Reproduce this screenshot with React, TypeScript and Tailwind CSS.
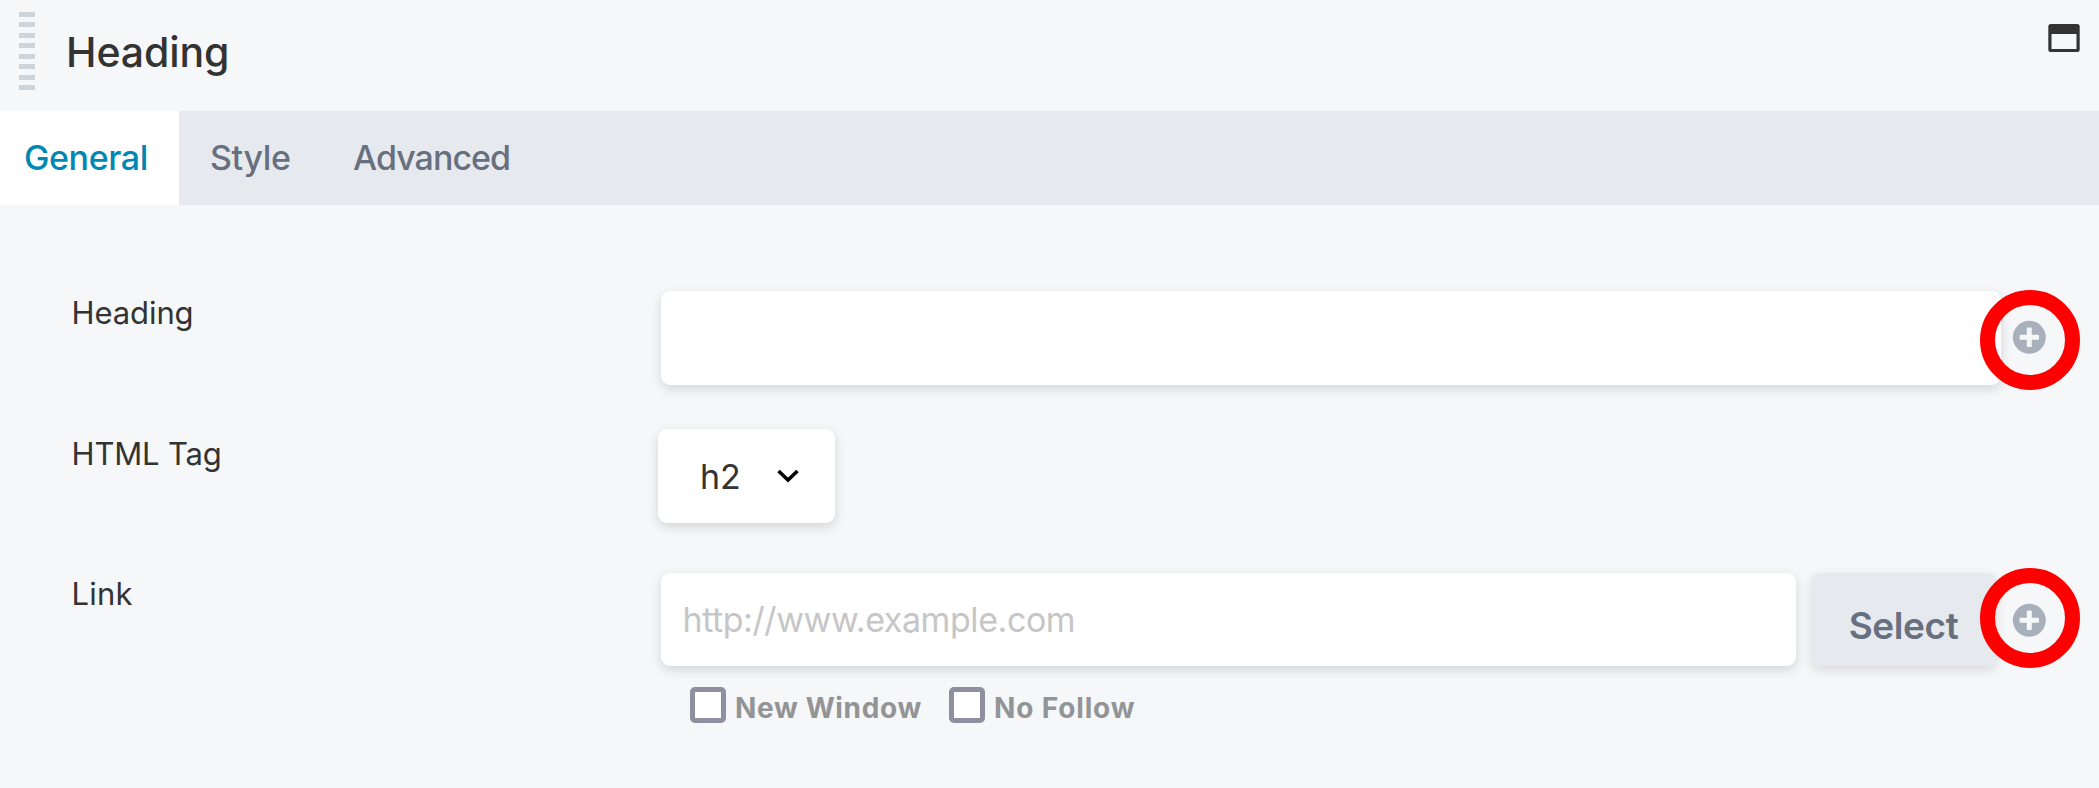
import type { ReactNode } from "react";

const handleBars = [0, 1, 2, 3, 4, 5, 6, 7];

function DragHandle() {
  return (
    <div className="flex h-[78px] w-4 flex-col justify-between">
      {handleBars.map((bar) => (
        <span key={bar} className="h-[5px] w-full bg-[#ccd4dc]" />
      ))}
    </div>
  );
}

function WindowIcon() {
  return (
    <svg width="32" height="28" viewBox="0 0 32 28">
      <path
        fill="#333333"
        fillRule="evenodd"
        d="M2.8 0H29.2a2.5 2.5 0 0 1 2.5 2.5V25.5a2.5 2.5 0 0 1-2.5 2.5H2.8a2.5 2.5 0 0 1-2.5-2.5V2.5A2.5 2.5 0 0 1 2.8 0ZM3.5 10V25H28.5V10Z"
      />
    </svg>
  );
}

function FieldConnect({ ringClass }: { ringClass: string }) {
  return (
    <div className="relative size-[34px]">
      <svg width="34" height="34" viewBox="0 0 34 34">
        <circle cx="17.3" cy="17.3" r="16.5" fill="#a8b0bc" />
        <path
          fill="#f5f7f9"
          d="M15.6 7.6H19a.8.8 0 0 1 .8.8V14.8H26.2a.8.8 0 0 1 .8.8V19a.8.8 0 0 1-.8.8H19.8V26.2a.8.8 0 0 1-.8.8H15.6a.8.8 0 0 1-.8-.8V19.8H8.4a.8.8 0 0 1-.8-.8V15.6a.8.8 0 0 1 .8-.8H14.8V8.4a.8.8 0 0 1 .8-.8Z"
        />
      </svg>
      <span className={`absolute size-[100px] rounded-full border-[15px] border-[#ff0000] ${ringClass}`} />
    </div>
  );
}

function Row({
  label,
  className,
  labelClass,
  children,
}: {
  label: string;
  className: string;
  labelClass: string;
  children: ReactNode;
}) {
  return (
    <div className={`flex items-start ${className}`}>
      <div
        className={`w-[587px] shrink-0 pl-[0.6px] text-[31px] leading-[44px] whitespace-nowrap text-[#333333] ${labelClass}`}
      >
        {label}
      </div>
      {children}
    </div>
  );
}

function Check({ label, className }: { label: string; className: string }) {
  return (
    <label
      className={`flex items-center text-[28px] leading-9 font-bold whitespace-nowrap text-[#929496] ${className}`}
    >
      <input type="checkbox" className="size-9 appearance-none rounded-[5px] border-[5px] border-[#8f8f9f] bg-white" />
      <span className="mt-[6px] ml-[9px]">{label}</span>
    </label>
  );
}

export default function App() {
  return (
    <div className="h-[788px] w-full overflow-hidden bg-[#f5f7f9] font-['Inter',sans-serif]">
      <header className="flex h-[111px] items-start justify-between pr-[19px] pl-[19px]">
        <div className="flex items-start pt-3">
          <DragHandle />
          <h1 className="ml-[29px] pt-[15px] pl-[2px] text-[41px] leading-[50px] font-medium tracking-[-0.1px] text-[#333333]">
            Heading
          </h1>
        </div>
        <button className="mt-6">
          <WindowIcon />
        </button>
      </header>

      <nav className="flex h-[94px] bg-[#e6eaef] text-[34px] leading-[94px] font-medium text-[#686f7e]">
        <button className="w-[179px] bg-white pl-6 text-left tracking-[-0.4px] text-[#0087b3]">General</button>
        <button className="w-[142px] pl-[31px] text-left tracking-[-0.4px]">Style</button>
        <button className="pl-8 text-left tracking-[-0.95px]">Advanced</button>
      </nav>

      <main className="pl-[71px]">
        <Row label="Heading" className="pt-[86px]" labelClass="tracking-[-0.1px]">
          <input
            type="text"
            className="mb-11 ml-[3px] h-[94px] w-[1340px] rounded-[9px] bg-white shadow-[0_4px_12px_rgba(0,0,0,0.14)]"
          />
          <div className="mt-[29px] ml-[11px]">
            <FieldConnect ringClass="-top-[30px] -left-[32px]" />
          </div>
        </Row>

        <Row label="HTML Tag" className="h-[144px]" labelClass="pt-[3px] tracking-[-0.2px]">
          <button className="flex h-[94px] w-[177px] items-center rounded-[9px] bg-white pl-[42px] text-[34px] leading-[94px] text-[#333333] shadow-[0_4px_12px_rgba(0,0,0,0.14)]">
            <span className="pt-[2px]">h2</span>
            <svg className="ml-[36.5px]" width="22" height="14" viewBox="0 0 22 14" fill="none">
              <path d="M1.5 2L11 11L20.5 2" stroke="#000000" strokeWidth="3.6" />
            </svg>
          </button>
        </Row>

        <Row label="Link" className="" labelClass="-mt-px tracking-[0.2px]">
          <div>
            <div className="flex items-start">
              <input
                type="text"
                placeholder="http://www.example.com"
                className="ml-[3px] h-[93px] w-[1135px] rounded-[9px] bg-white pl-[21.5px] text-[34px] tracking-[-0.43px] text-[#333333] shadow-[0_4px_12px_rgba(0,0,0,0.14)] placeholder:text-[#c6c6c6]"
              />
              <button className="ml-4 h-[93px] w-[184px] rounded-[6px] bg-[#e6eaef] pt-[13px] pr-px text-[37px] leading-[80px] font-semibold tracking-[-0.4px] text-[#686f7e] shadow-[0_4px_12px_rgba(0,0,0,0.12)]">
                Select
              </button>
              <div className="mt-[30px] ml-4">
                <FieldConnect ringClass="-top-[35px] -left-[32px]" />
              </div>
            </div>
            <div className="mt-[18px] ml-8 flex items-start">
              <Check label="New Window" className="w-[259px] tracking-[0.65px]" />
              <Check label="No Follow" className="tracking-[0.85px]" />
            </div>
          </div>
        </Row>
      </main>
    </div>
  );
}
